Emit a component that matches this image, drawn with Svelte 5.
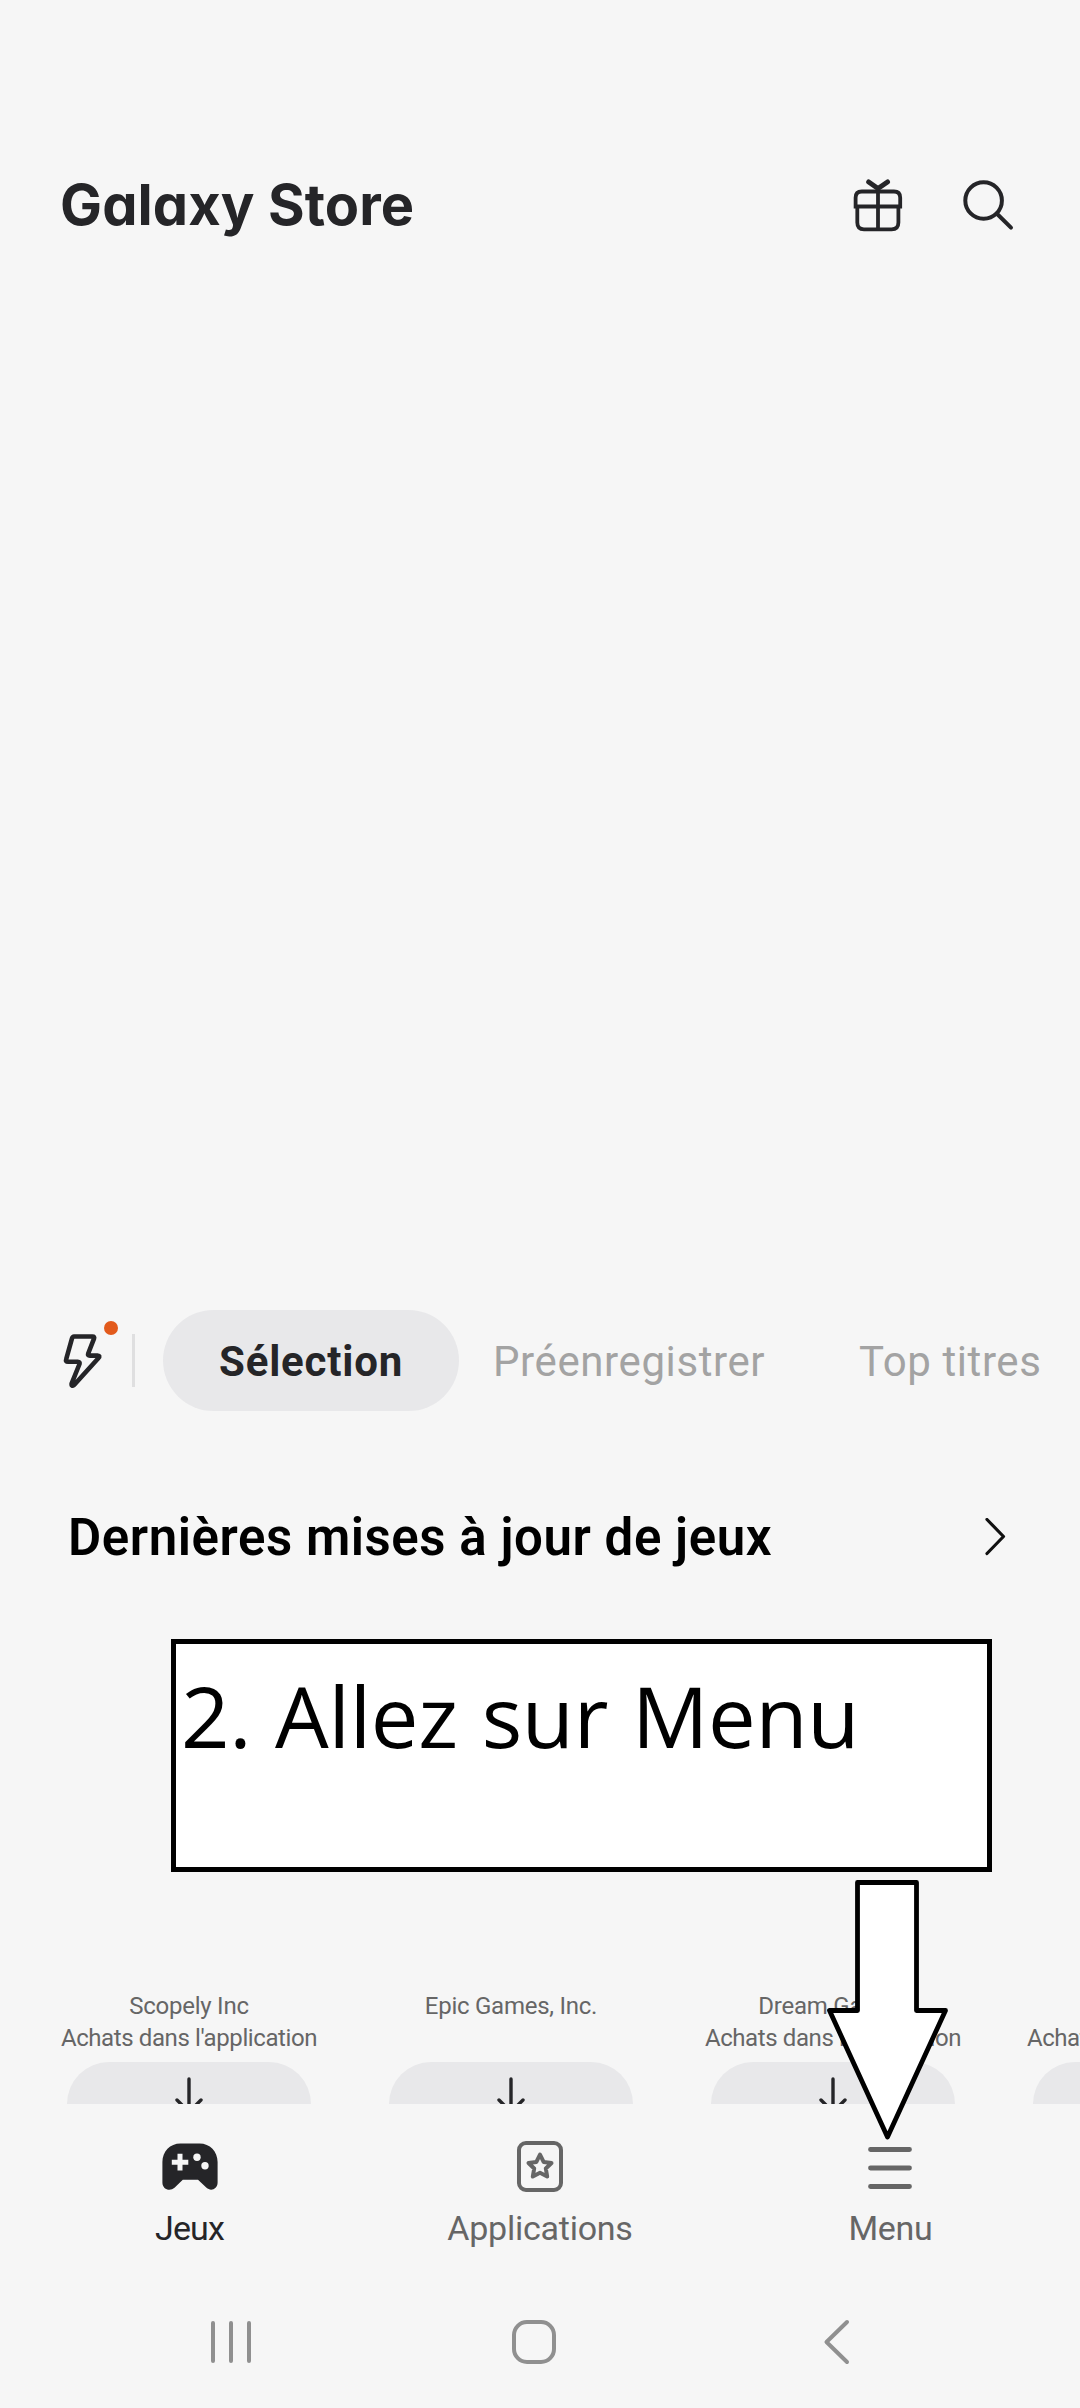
<script>
  const tabs = [
    { label: 'Préenregistrer', name: 'pre' },
    { label: 'Top titres', name: 'top' }
  ];
  const cards = [
    { maker: 'Scopely Inc', note: "Achats dans l'application" },
    { maker: 'Epic Games, Inc.', note: '' },
    { maker: 'Dream Games', note: "Achats dans l'application" },
    { maker: '', note: "Achats dans l'application" }
  ];
</script>

<div class="screen">
  <main>
    <header>
      <h1>Galaxy Store</h1>
      <div class="actions">
        <svg width="60" height="60" viewBox="0 0 60 60" fill="none" stroke="#252528" stroke-width="3.8">
          <path d="M7.600 31.500V22.700Q7.600 16.500 13.800 16.500H46Q52.200 16.500 52.200 22.700V31.500Z" />
          <path d="M9.300 31.500V47.500Q9.300 54.300 16 54.300H43.600Q50.400 54.300 50.400 47.500V31.500M30 15V54" />
          <path d="M20.700 7L30 13.500L39.500 7" stroke-width="5" stroke-linecap="round" />
        </svg>
        <svg width="60" height="60" viewBox="0 0 60 60" fill="none" stroke="#252528" stroke-width="4" stroke-linecap="round">
          <circle cx="25.600" cy="25.500" r="18.300" />
          <path d="M38.700 38.500L53 52.700" />
        </svg>
      </div>
    </header>

    <nav class="tabs">
      <div class="flash">
        <svg width="44" height="60" viewBox="0 0 44 60" fill="none" stroke="#252528" stroke-width="4.600" stroke-linejoin="round">
          <path d="M14 5.500H32.500Q34.800 5.500 34 7.600L28.200 22.500Q27.500 24.600 29.800 24.600H37.500Q40.700 24.700 38.300 27.200L14.300 53.800Q11.200 56.300 11.600 52.600L19.500 33Q20.200 30.700 17.800 30.700H8Q5.300 30.700 6.200 28.200L12 7.400Q12.600 5.500 14 5.500Z" />
        </svg>
        <span class="dot"></span>
      </div>
      <span class="divider"></span>
      <span class="pill">Sélection</span>
      {#each tabs as tab}
        <span class="tab {tab.name}">{tab.label}</span>
      {/each}
    </nav>

    <section class="heading">
      <h2>Dernières mises à jour de jeux</h2>
      <svg width="24" height="40" viewBox="0 0 24 40" fill="none" stroke="#111" stroke-width="3.200" stroke-linecap="round" stroke-linejoin="round">
        <path d="M3 1.500L19.500 18.500L3 35.500" />
      </svg>
    </section>

    <section class="cards">
      {#each cards as card}
        <article>
          <p>{card.maker}</p>
          <p class="note">{card.note}</p>
          <div class="get">
            <svg width="32" height="48" viewBox="0 0 32 48" fill="none" stroke="#252528" stroke-width="3.400" stroke-linecap="round">
              <path d="M16 2V35M4 23L16 35L28 23" />
            </svg>
          </div>
        </article>
      {/each}
    </section>
  </main>

  <nav class="bottom">
    <div class="item active">
      <svg width="60" height="60" viewBox="0 0 60 60">
        <path fill="#252528" d="M20.500 6.500H39.500C50 6.500 57.600 14.500 57.600 25V45.500C57.600 52.500 50.500 54.500 46.500 50.800L38 42.700H22.800L14.500 50.800C10 54.800 2.400 52.500 2.400 45.500V25C2.400 14.500 10 6.500 20.500 6.500Z" />
        <path stroke="#f6f6f6" stroke-width="5" d="M20 16.800V33.500M11.800 25.200H28.300" />
        <circle cx="37" cy="20.300" r="3.700" fill="#f6f6f6" />
        <circle cx="45" cy="28.800" r="3.700" fill="#f6f6f6" />
      </svg>
      <span>Jeux</span>
    </div>
    <div class="item apps">
      <svg width="60" height="60" viewBox="0 0 60 60" fill="none" stroke="#666" stroke-width="4" stroke-linejoin="round">
        <rect x="9" y="6" width="42" height="47" rx="7" />
        <path d="M30 17.500L33.600 24.900L41.500 26L35.800 31.500L37.200 39.500L30 35.800L22.800 39.500L24.200 31.500L18.500 26L26.400 24.900Z" />
      </svg>
      <span>Applications</span>
    </div>
    <div class="item menu">
      <svg width="60" height="60" viewBox="0 0 60 60" stroke="#666" stroke-width="4.800" stroke-linecap="round">
        <path d="M9.500 12.500H48.500M9.500 31H48.500M9.500 49.500H48.500" />
      </svg>
      <span>Menu</span>
    </div>
  </nav>

  <footer>
    <svg width="50" height="50" viewBox="0 0 50 50"><path d="M7 6V44M25 6V44M43 6V44" /></svg>
    <svg width="50" height="50" viewBox="0 0 50 50"><rect x="5" y="5" width="40" height="40" rx="13" /></svg>
    <svg width="50" height="50" viewBox="0 0 50 50"><path d="M35 5L14.500 25L35 45" /></svg>
  </footer>

  <aside class="callout"><span>2. Allez sur Menu</span></aside>
  <svg class="pointer" width="130" height="264" viewBox="0 0 130 264">
    <path d="M37.500 4.500H96.500V132.500H125.500L67.500 259L9.500 132.500H37.500Z" fill="#fff" stroke="#000" stroke-width="4.800" stroke-linejoin="round" />
  </svg>
</div>

<style>
  :global(body) { margin: 0; background: #f6f6f6; }
  .screen {
    position: relative;
    width: 1080px;
    height: 2408px;
    overflow: hidden;
    background: #f6f6f6;
    font-family: Roboto, sans-serif;
    color: #252528;
    white-space: nowrap;
  }
  svg { display: block; flex: none; }
  h1, h2, p { margin: 0; }
  main {
    height: 2104px;
    overflow: hidden;
    display: flex;
    flex-direction: column;
  }
  header {
    height: 200px;
    margin-top: 105px;
    padding: 0 62px 0 60px;
    display: flex;
    align-items: center;
    justify-content: space-between;
    flex: none;
  }
  h1 {
    font: 700 56px/60px Inter, sans-serif;
    font-feature-settings: 'cv11';
    letter-spacing: .1px;
  }
  .actions { display: flex; gap: 50px; }
  .tabs {
    height: 101px;
    margin-top: 1005px;
    padding-left: 60px;
    display: flex;
    align-items: center;
    flex: none;
    font-size: 42px;
    line-height: 50px;
  }
  .flash { position: relative; width: 72px; }
  .dot {
    position: absolute;
    left: 44px;
    top: -10px;
    width: 14px;
    height: 14px;
    border-radius: 50%;
    background: #e25a1c;
  }
  .divider { width: 3px; height: 53px; background: #dfdfe0; }
  .pill {
    box-sizing: border-box;
    width: 296px;
    height: 101px;
    margin: 0 34px 0 28px;
    padding-top: 2px;
    border-radius: 51px;
    background: #e8e8ea;
    font-weight: 700;
    line-height: 99px;
    letter-spacing: .8px;
    text-align: center;
  }
  .tab { color: #a3a3a3; padding-top: 2px; letter-spacing: .6px; }
  .pre { width: 366px; }
  .heading {
    height: 100px;
    margin-top: 77px;
    padding: 0 72px 0 68px;
    display: flex;
    align-items: center;
    justify-content: space-between;
    flex: none;
    color: #000;
  }
  h2 { font-size: 51px; font-weight: 600; line-height: 60px; letter-spacing: .55px; }
  .cards {
    display: grid;
    grid-template-columns: repeat(4, 322px);
    margin: 402px 0 0 28px;
    font-size: 24px;
    line-height: 32px;
    letter-spacing: -.25px;
    color: #666;
    text-align: center;
  }
  .cards p { height: 32px; }
  .cards .note { letter-spacing: -.4px; }
  .get {
    display: flex;
    justify-content: center;
    width: 244px;
    height: 84px;
    box-sizing: border-box;
    margin: 8px auto 0;
    padding-top: 15px;
    border-radius: 42px;
    background: #e8e8ea;
  }
  .bottom {
    display: grid;
    grid-template-columns: repeat(3, 350.5px);
    justify-content: center;
    height: 178px;
    padding-top: 33px;
    box-sizing: border-box;
    font-size: 34px;
    line-height: 40px;
    letter-spacing: -.25px;
    color: #666;
  }
  .item { display: flex; flex-direction: column; align-items: center; gap: 11px; }
  .active { color: #252528; letter-spacing: -.9px; }
  footer {
    display: grid;
    grid-template-columns: repeat(3, 303px);
    justify-items: center;
    margin: 35px 0 0 79px;
  }
  footer svg { fill: none; stroke: #909090; stroke-width: 4px; stroke-linecap: round; stroke-linejoin: round; }
  .callout {
    position: absolute;
    left: 171px;
    top: 1639px;
    width: 821px;
    height: 233px;
    box-sizing: border-box;
    border: 5px solid #000;
    padding: 11px 0 0 5px;
    background: #fff;
    color: #000;
    font: 400 85px/120px 'Open Sans', sans-serif;
    letter-spacing: -.3px;
    word-spacing: 2px;
  }
  .pointer { position: absolute; left: 820px; top: 1878px; }
</style>
